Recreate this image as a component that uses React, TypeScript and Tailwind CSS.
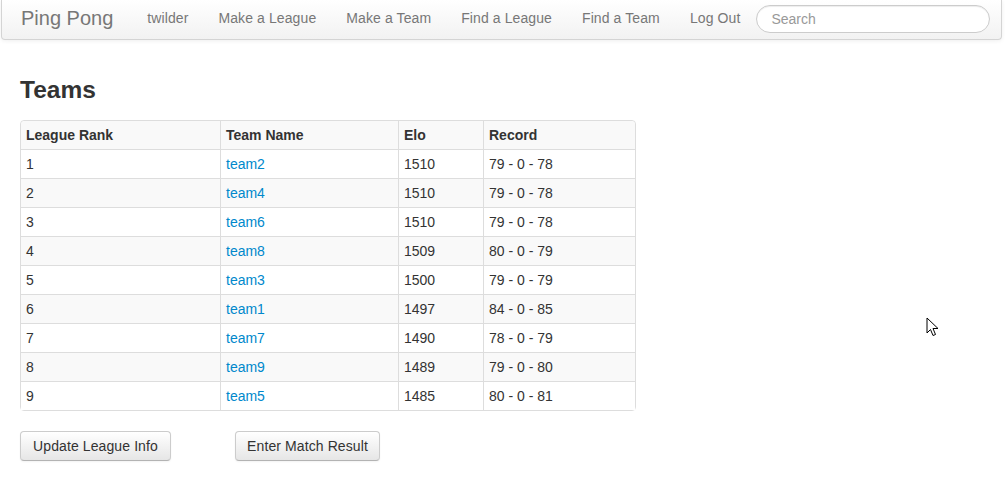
import React from 'react';

const teams = [
  { rank: 1, name: 'team2', elo: 1510, record: '79 - 0 - 78' },
  { rank: 2, name: 'team4', elo: 1510, record: '79 - 0 - 78' },
  { rank: 3, name: 'team6', elo: 1510, record: '79 - 0 - 78' },
  { rank: 4, name: 'team8', elo: 1509, record: '80 - 0 - 79' },
  { rank: 5, name: 'team3', elo: 1500, record: '79 - 0 - 79' },
  { rank: 6, name: 'team1', elo: 1497, record: '84 - 0 - 85' },
  { rank: 7, name: 'team7', elo: 1490, record: '78 - 0 - 79' },
  { rank: 8, name: 'team9', elo: 1489, record: '79 - 0 - 80' },
  { rank: 9, name: 'team5', elo: 1485, record: '80 - 0 - 81' },
];

const navLinks = ['twilder', 'Make a League', 'Make a Team', 'Find a League', 'Find a Team', 'Log Out'];

const cell = 'px-[5px] py-1 leading-5 border-l border-[#dddddd] first:border-l-0';
const btn =
  'rounded-[4px] border border-[#cccccc] border-b-[#b3b3b3] bg-gradient-to-b from-white to-[#e6e6e6] py-1 leading-5 text-[#333333] tracking-[0.1px] shadow-[inset_0_1px_0_rgba(255,255,255,0.2),0_1px_2px_rgba(0,0,0,0.05)]';

const App: React.FC = () => {
  return (
    <div className="relative min-h-[500px] bg-white text-[14px] leading-5 text-[#333333]" style={{ fontFamily: '"Liberation Sans", Arial, sans-serif' }}>
      {/* navbar */}
      <div className="ml-px mr-[4px] flex h-10 items-center rounded-b-[4px] border border-t-0 border-[#d4d4d4] bg-gradient-to-b from-white to-[#f2f2f2] pb-[3px] pl-[19px] shadow-[0_1px_4px_rgba(0,0,0,0.065)]">
        <a className="pr-[19px] text-[20px] leading-5 text-[#777777]">Ping Pong</a>
        <nav className="flex">
          {navLinks.map((l) => (
            <a key={l} className="px-[15px] leading-5 tracking-[0.1px] text-[#777777]">{l}</a>
          ))}
        </nav>
        <input
          placeholder="Search"
          className="ml-[1px] mt-[1px] h-7 w-[234px] rounded-[15px] border border-[#cccccc] bg-white px-[14px] text-[14px] shadow-[inset_0_1px_1px_rgba(0,0,0,0.075)] outline-none placeholder:text-[#999999]"
        />
      </div>

      <div className="px-5 pt-[30px]">
        <h3 className="my-0 text-[24.5px] font-bold leading-10">Teams</h3>

        <table className="mt-[10px] w-[616px] border-separate border-spacing-0 rounded-[4px] border border-[#dddddd]">
          <tbody>
            <tr className="bg-[#f9f9f9] text-left font-bold">
              <th className={`${cell} w-[199px] rounded-tl-[4px] text-left`}>League Rank</th>
              <th className={`${cell} w-[178px] text-left`}>Team Name</th>
              <th className={`${cell} w-[85px] text-left`}>Elo</th>
              <th className={`${cell} rounded-tr-[4px] text-left`}>Record</th>
            </tr>
            {teams.map((t, i) => (
              <tr key={t.rank} className={i % 2 === 1 ? 'bg-[#f9f9f9]' : 'bg-white'}>
                <td className={`${cell} border-t`}>{t.rank}</td>
                <td className={`${cell} border-t`}>
                  <a className="text-[#0088cc]">{t.name}</a>
                </td>
                <td className={`${cell} border-t`}>{t.elo}</td>
                <td className={`${cell} border-t`}>{t.record}</td>
              </tr>
            ))}
          </tbody>
        </table>

        <div className="mt-[20px] flex gap-[64px]">
          <button className={`${btn} w-[151px]`}>Update League Info</button>
          <button className={`${btn} w-[145px]`}>Enter Match Result</button>
        </div>
      </div>

      {/* mouse cursor */}
      <svg className="absolute left-[926px] top-[317px]" width="14" height="21" viewBox="0 0 14 21">
        <path d="M1 1 L1 16 L4.5 12.5 L7 18.5 L9.5 17.5 L7 11.5 L12 11.5 Z" fill="white" stroke="black" strokeWidth="1" strokeLinejoin="round" />
      </svg>
    </div>
  );
};

export default App;
